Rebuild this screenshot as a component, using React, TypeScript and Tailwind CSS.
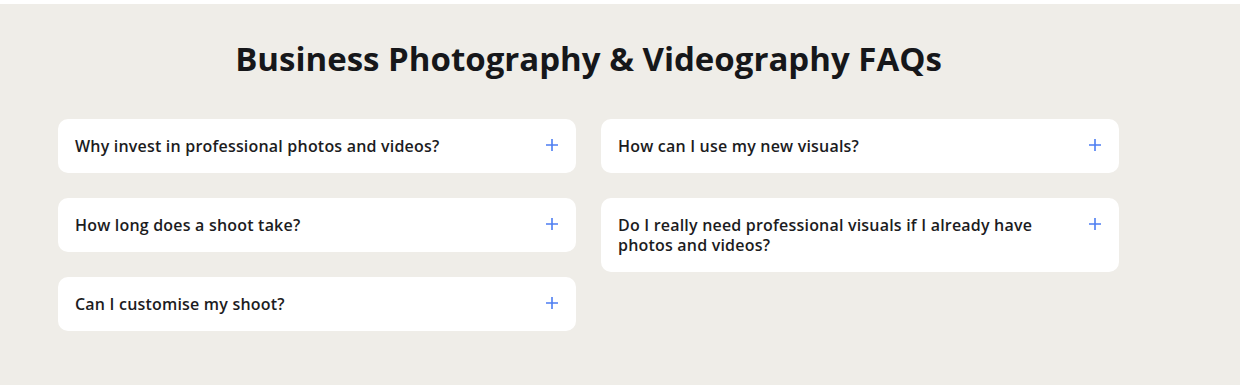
import React from "react";

const left = [
  "Why invest in professional photos and videos?",
  "How long does a shoot take?",
  "Can I customise my shoot?",
];

const right = [
  "How can I use my new visuals?",
  "Do I really need professional visuals if I already have photos and videos?",
];

const Plus = () => (
  <svg width="12" height="12" viewBox="0 0 12 12" className="shrink-0 mt-[3px]">
    <path d="M6 0v12M0 6h12" stroke="#4d7ef2" strokeWidth="1.6" />
  </svg>
);

const Item = ({ q }: { q: string }) => (
  <div className="bg-white rounded-[10px] pl-[17px] pr-[18px] pt-[17px] pb-[17px] flex items-start justify-between gap-10">
    <p className="text-[16px] leading-[20px] font-semibold tracking-[0.2px] text-[#1c1c1e] max-w-[430px]">{q}</p>
    <Plus />
  </div>
);

export default function App() {
  return (
    <div className="w-[1240px] h-[385px] bg-white pt-[4px]" style={{ fontFamily: "'Open Sans', sans-serif" }}>
      <div className="bg-[#efede8] h-[381px] pl-[58px] pt-[35px]">
        <div className="w-[1061px]">
          <h2 className="text-center text-[33px] leading-[40px] font-bold text-[#16171a]">
            Business Photography &amp; Videography FAQs
          </h2>
          <div className="grid grid-cols-2 gap-x-[25px] mt-[40px] items-start">
            <div className="flex flex-col gap-[25px]">
              {left.map((q) => (
                <Item key={q} q={q} />
              ))}
            </div>
            <div className="flex flex-col gap-[25px]">
              {right.map((q) => (
                <Item key={q} q={q} />
              ))}
            </div>
          </div>
        </div>
      </div>
    </div>
  );
}
